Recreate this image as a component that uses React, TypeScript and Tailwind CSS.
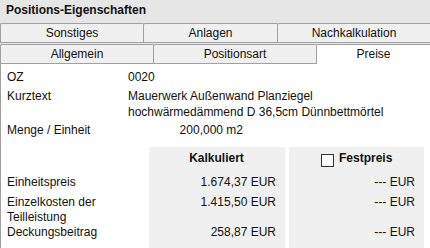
import React from 'react';

const tabsTop = [
  { label: 'Sonstiges', w: 'w-[143px]' },
  { label: 'Anlagen', w: 'w-[134px]' },
  { label: 'Nachkalkulation', w: 'flex-1' },
];

const tabsBottom = [
  { label: 'Allgemein', w: 'w-[153px]', active: false },
  { label: 'Positionsart', w: 'w-[163px]', active: false },
  { label: 'Preise', w: 'flex-1', active: true },
];

const rows = [
  { label: ['Einheitspreis'], calc: '1.674,37 EUR', cls: 'mt-[4px]' },
  { label: ['Einzelkosten der', 'Teilleistung'], calc: '1.415,50 EUR', cls: 'mt-[5px]' },
  { label: ['Deckungsbeitrag'], calc: '258,87 EUR', cls: '' },
];

export default function App() {
  return (
    <div className="w-[430px] h-[248px] overflow-hidden bg-[#e6e6e6] text-[12px] text-[#111] font-['Liberation_Sans',Arial,sans-serif]">
      {/* Title */}
      <div className="h-[23px] pl-[6px] pt-[3px] font-bold leading-[15px]">Positions-Eigenschaften</div>

      {/* Tab rows */}
      <div className="flex h-[20px]">
        {tabsTop.map((t) => (
          <div
            key={t.label}
            className={`${t.w} flex items-center justify-center border-t border-b border-l border-[#a0a0a0] bg-[#f0f0f0] rounded-tl-[2px] leading-[15px]`}
          >
            {t.label}
          </div>
        ))}
      </div>
      <div className="flex h-[20px] mt-[1px]">
        {tabsBottom.map((t) => (
          <div
            key={t.label}
            className={`${t.w} flex items-center justify-center border-t border-l border-[#a0a0a0] rounded-tl-[2px] leading-[15px] ${
              t.active ? 'bg-white' : 'bg-[#f0f0f0] border-b'
            }`}
          >
            {t.label}
          </div>
        ))}
      </div>

      {/* Content */}
      <div className="h-[185px] bg-white border-l border-[#a0a0a0] pl-[6px] leading-[16px]">
        <div className="pt-[5px] flex">
          <div className="w-[121px]">OZ</div>
          <div>0020</div>
        </div>
        <div className="mt-[3px] flex">
          <div className="w-[121px]">Kurztext</div>
          <div>
            <div>Mauerwerk Außenwand Planziegel</div>
            <div>hochwärmedämmend D 36,5cm Dünnbettmörtel</div>
          </div>
        </div>
        <div className="mt-[2px] flex">
          <div className="w-[121px]">Menge / Einheit</div>
          <div className="w-[115px] text-right">200,000 m2</div>
        </div>

        {/* Price table */}
        <div className="mt-[9px] flex leading-[15px]">
          <div className="w-[142px]">
            <div className="h-[24px]" />
            {rows.map((r) => (
              <div key={r.calc} className={r.cls}>
                {r.label.map((l) => (
                  <div key={l}>{l}</div>
                ))}
              </div>
            ))}
          </div>
          <div className="w-[136px] h-[102px] bg-[#f0f0f0] pr-[9px]">
            <div className="h-[24px] pt-[4px] text-center font-bold pl-[8px]">Kalkuliert</div>
            {rows.map((r) => (
              <div key={r.calc} className={`${r.cls} text-right ${r.label.length > 1 ? 'h-[30px]' : ''}`}>
                {r.calc}
              </div>
            ))}
          </div>
          <div className="w-[135px] ml-[4px] h-[102px] bg-[#f0f0f0] pr-[9px]">
            <div className="h-[24px] pt-[4px] pl-[32px] flex items-start gap-[5px] font-bold">
              <span className="mt-[3px] w-[13px] h-[13px] border border-[#333] bg-white" />
              <span>Festpreis</span>
            </div>
            {rows.map((r) => (
              <div key={r.calc} className={`${r.cls} text-right ${r.label.length > 1 ? 'h-[30px]' : ''}`}>
                --- EUR
              </div>
            ))}
          </div>
        </div>
      </div>
    </div>
  );
}
